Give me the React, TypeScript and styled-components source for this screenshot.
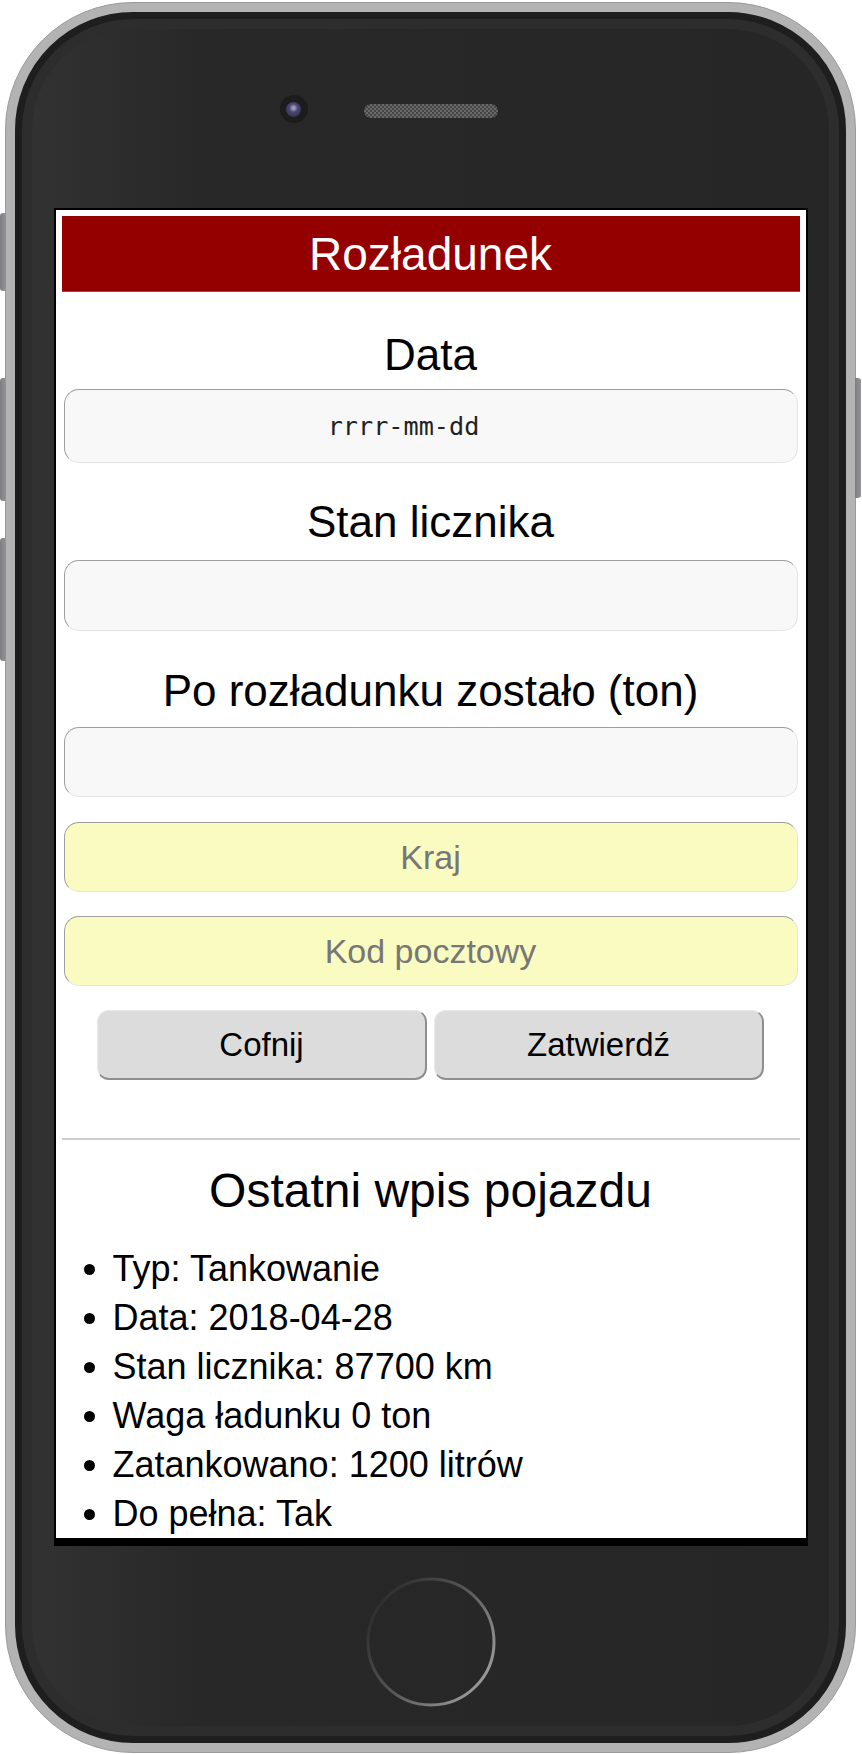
import React from "react";
import styled, { createGlobalStyle } from "styled-components";

const GlobalStyle = createGlobalStyle`
  html, body {
    margin: 0;
    padding: 0;
    background: #ffffff;
  }
  #root {
    padding: 2px 0 0 5px;
  }
  * { box-sizing: border-box; }
`;

const Phone = styled.div`
  position: relative;
  width: 851px;
  height: 1751px;
  padding: 9px;
  border-radius: 128px;
  border: 1px solid #9a9a9a;
  background: #b3b3b3;
`;

const SideKey = styled.div<{ $side: "left" | "right"; $top: number; $h: number }>`
  position: absolute;
  top: ${(p) => p.$top}px;
  height: ${(p) => p.$h}px;
  width: 6px;
  ${(p) =>
    p.$side === "left"
      ? "left: -6px; border-radius: 3px 0 0 3px;"
      : "right: -6px; border-radius: 0 3px 3px 0;"}
  background: linear-gradient(90deg, #7d7d82, #949499);
`;

const Body = styled.div`
  width: 100%;
  height: 100%;
  border: 7px solid #1e1e1e;
  border-radius: 118px;
  background: linear-gradient(90deg, #323232 0%, #282828 22%, #262626 100%);
  box-shadow: inset 0 0 0 10px #2d2d2d;
  display: flex;
  flex-direction: column;
  align-items: center;
  padding-top: 76px;
`;

const TopRow = styled.div`
  width: 100%;
  height: 28px;
  display: grid;
  grid-template-columns: 1fr auto 1fr;
  align-items: center;
`;

const Camera = styled.div`
  justify-self: end;
  margin-right: 56px;
  width: 28px;
  height: 28px;
  border-radius: 50%;
  background: #1c1c1c;
  display: flex;
  align-items: center;
  justify-content: center;
`;

const Lens = styled.div`
  width: 15px;
  height: 15px;
  border-radius: 50%;
  background: radial-gradient(circle at 50% 40%, #9a9ab8 0 12%, #4b4872 35%, #2a2840 100%);
`;

const Speaker = styled.div`
  margin-top: 4px;
  width: 134px;
  height: 14px;
  border-radius: 7px;
  background: repeating-conic-gradient(#6a6a6a 0 25%, #454545 0 50%) 0 0 / 4px 4px;
`;

const ScreenFrame = styled.div`
  margin-top: 85px;
  width: 754px;
  padding: 2px 2px 8px 2px;
  background: #000;
`;

const Display = styled.div`
  width: 750px;
  height: 1328px;
  overflow: hidden;
  background: #fff;
  padding: 6px;
  font-family: "Liberation Sans", Arial, sans-serif;
  color: #000;
`;

const Header = styled.div`
  height: 76px;
  background: #940000;
  border-bottom: 1px solid #b83a3a;
  color: #fff;
  font-size: 46px;
  display: flex;
  align-items: center;
  justify-content: center;
`;

const Label = styled.div<{ $top: number; $bottom: number }>`
  margin: ${(p) => p.$top}px 0 ${(p) => p.$bottom}px;
  font-size: 44px;
  line-height: 50px;
  text-align: center;
`;

const Field = styled.input<{ $h: number; $tone?: "plain" | "yellow"; $mono?: boolean; $top?: number }>`
  display: block;
  width: calc(100% - 4px);
  height: ${(p) => p.$h}px;
  margin: ${(p) => p.$top ?? 0}px 2px 0;
  padding: ${(p) => (p.$mono ? "0 54px 0 0" : "0")};
  border-style: solid;
  border-width: 1px;
  border-color: #9e9e9e #e4e4e4 #e4e4e4 #9e9e9e;
  border-radius: 15px;
  background: ${(p) => (p.$tone === "yellow" ? "#f9fbc0" : "#f8f8f8")};
  text-align: center;
  outline: none;
  font-family: ${(p) => (p.$mono ? `"DejaVu Sans Mono", "Liberation Mono", monospace` : `"Liberation Sans", Arial, sans-serif`)};
  font-size: ${(p) => (p.$mono ? "25.2px" : "34px")};
  color: #222;
  &::placeholder {
    color: ${(p) => (p.$mono ? "#222" : "#777")};
    opacity: 1;
  }
`;

const ButtonRow = styled.div`
  margin-top: 24px;
  display: flex;
  justify-content: center;
  gap: 7px;
`;

const Button = styled.button`
  width: 330px;
  height: 70px;
  background: #dcdcdc;
  border-style: solid;
  border-width: 1px 2px 2px 1px;
  border-color: #e9e9e9 #8e8e8e #8e8e8e #e9e9e9;
  border-radius: 12px;
  font-family: "Liberation Sans", Arial, sans-serif;
  font-size: 33px;
  color: #000;
  padding: 0;
`;

const Divider = styled.hr`
  margin: 58px 0 0;
  border: none;
  border-top: 2px solid #cecece;
  height: 0;
`;

const SectionTitle = styled.div`
  margin: 23px 0 26px;
  font-size: 48px;
  line-height: 55px;
  text-align: center;
`;

const InfoList = styled.ul`
  margin: 0;
  padding-left: 51px;
  font-size: 36px;
  line-height: 49px;
  list-style: disc;
`;

const HomeButton = styled.div`
  margin-top: 31px;
  width: 130px;
  height: 130px;
  display: flex;
`;

const items = [
  "Typ: Tankowanie",
  "Data: 2018-04-28",
  "Stan licznika: 87700 km",
  "Waga ładunku 0 ton",
  "Zatankowano: 1200 litrów",
  "Do pełna: Tak",
];

export default function App() {
  return (
    <>
      <GlobalStyle />
      <Phone>
        <SideKey $side="left" $top={210} $h={78} />
        <SideKey $side="left" $top={375} $h={123} />
        <SideKey $side="left" $top={535} $h={123} />
        <SideKey $side="right" $top={375} $h={120} />
        <Body>
          <TopRow>
            <Camera>
              <Lens />
            </Camera>
            <Speaker />
            <div />
          </TopRow>
          <ScreenFrame>
            <Display>
              <Header>Rozładunek</Header>
              <Label $top={38} $bottom={9}>Data</Label>
              <Field $h={74} $mono placeholder="rrrr-mm-dd" readOnly />
              <Label $top={34} $bottom={13}>Stan licznika</Label>
              <Field $h={71} readOnly />
              <Label $top={35} $bottom={11}>Po rozładunku zostało (ton)</Label>
              <Field $h={70} readOnly />
              <Field $h={70} $top={25} $tone="yellow" placeholder="Kraj" readOnly />
              <Field $h={70} $top={24} $tone="yellow" placeholder="Kod pocztowy" readOnly />
              <ButtonRow>
                <Button>Cofnij</Button>
                <Button>Zatwierdź</Button>
              </ButtonRow>
              <Divider />
              <SectionTitle>Ostatni wpis pojazdu</SectionTitle>
              <InfoList>
                {items.map((t) => (
                  <li key={t}>{t}</li>
                ))}
              </InfoList>
            </Display>
          </ScreenFrame>
          <HomeButton>
            <svg width="130" height="130" viewBox="0 0 130 130">
              <defs>
                <linearGradient id="ring" x1="0" y1="0.2" x2="1" y2="0.9">
                  <stop offset="0" stopColor="#2a2a2a" />
                  <stop offset="0.45" stopColor="#555" />
                  <stop offset="1" stopColor="#a8a8a8" />
                </linearGradient>
              </defs>
              <circle cx="65" cy="65" r="63" fill="none" stroke="url(#ring)" strokeWidth="3" />
            </svg>
          </HomeButton>
        </Body>
      </Phone>
    </>
  );
}
